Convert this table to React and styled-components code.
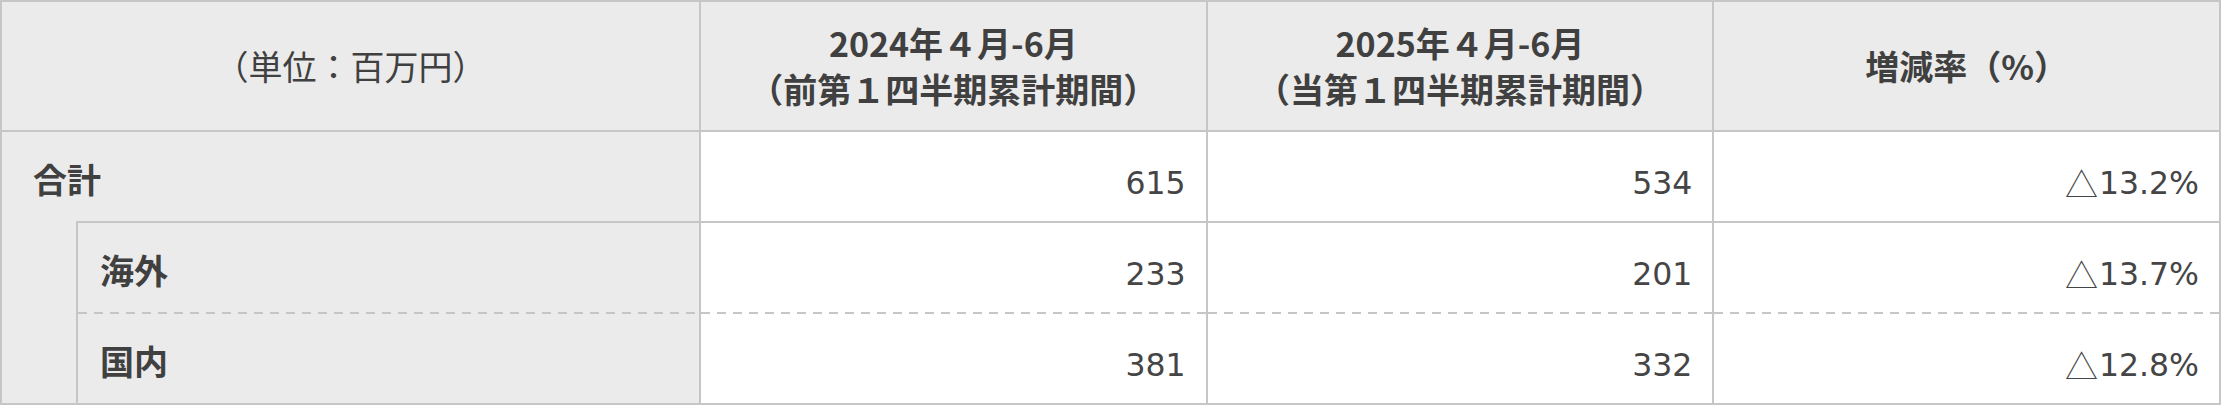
import React from 'react';
import styled, { createGlobalStyle, css } from 'styled-components';

const LINE = '#c6c6c6';
const GRAY = '#ebebeb';
const INK = '#404040';

const GlobalStyle = createGlobalStyle`
  html, body { margin: 0; padding: 0; background: #ffffff; }
  body {
    font-family: "Noto Sans CJK JP", sans-serif;
    color: ${INK};
  }
  * { box-sizing: border-box; }
`;

const dashedBottom = (bg) => css`
  background: repeating-linear-gradient(90deg, ${LINE} 0 9px, transparent 9px 16px) left bottom / 100% 2px no-repeat, ${bg};
  padding-bottom: 2px;
`;

const Table = styled.div`
  display: grid;
  grid-template-columns: 74px 625px repeat(3, 1fr);
  grid-template-rows: 130px repeat(3, 91px);
  width: 2221px;
  border-top: 2px solid ${LINE};
  border-left: 2px solid ${LINE};
`;

const HeadCell = styled.div`
  grid-column: ${(p) => p.$col || 'auto'};
  display: flex;
  flex-direction: column;
  align-items: center;
  justify-content: center;
  background: ${GRAY};
  border-right: 2px solid ${LINE};
  border-bottom: 2px solid ${LINE};
  font-size: 34px;
  line-height: 1.36;
  font-weight: ${(p) => (p.$bold ? 700 : 400)};
  text-align: center;
  white-space: nowrap;
`;

const TotalLabel = styled.div`
  grid-column: 1 / 3;
  display: flex;
  align-items: center;
  padding: 2px 0 0 31px;
  background: ${GRAY};
  border-right: 2px solid ${LINE};
  font-size: 34px;
  font-weight: 700;
`;

const Indent = styled.div`
  grid-column: 1;
  grid-row: 3 / 5;
  background: ${GRAY};
  border-bottom: 2px solid ${LINE};
`;

const SubLabel = styled.div`
  grid-column: 2;
  display: flex;
  align-items: center;
  padding: 4px 0 0 22px;
  border-left: 2px solid ${LINE};
  border-right: 2px solid ${LINE};
  font-size: 34px;
  font-weight: 700;
  ${(p) =>
    p.$first &&
    css`
      margin-top: -2px;
      border-top: 2px solid ${LINE};
    `}
  ${(p) =>
    p.$dashed
      ? dashedBottom(GRAY)
      : css`
          background: ${GRAY};
          border-bottom: 2px solid ${LINE};
        `}
`;

const ValueCell = styled.div`
  display: flex;
  align-items: center;
  justify-content: flex-end;
  padding: 12px 20px 0 0;
  border-right: 2px solid ${LINE};
  font-family: "DejaVu Sans", "Noto Sans CJK JP", sans-serif;
  font-size: 31.5px;
  color: #454545;
  white-space: nowrap;
  ${(p) =>
    p.$dashed
      ? dashedBottom('#ffffff')
      : css`
          background: #ffffff;
          border-bottom: 2px solid ${LINE};
        `}
`;

const Delta = styled.span`
  font-family: "Noto Sans CJK JP", sans-serif;
  font-weight: 300;
  font-size: 33px;
  margin-right: 1px;
`;

const Value = ({ v }) =>
  v.startsWith('△') ? (
    <>
      <Delta>△</Delta>
      {v.slice(1)}
    </>
  ) : (
    v
  );

const rows = [
  { label: '海外', values: ['233', '201', '△13.7%'], dashed: true, first: true },
  { label: '国内', values: ['381', '332', '△12.8%'], dashed: false, first: false },
];

export default function App() {
  return (
    <>
      <GlobalStyle />
      <Table>
        <HeadCell $col="1 / 3">（単位：百万円）</HeadCell>
        <HeadCell $bold>
          <span>2024年４月-6月</span>
          <span>（前第１四半期累計期間）</span>
        </HeadCell>
        <HeadCell $bold>
          <span>2025年４月-6月</span>
          <span>（当第１四半期累計期間）</span>
        </HeadCell>
        <HeadCell $bold>増減率（%）</HeadCell>

        <TotalLabel>合計</TotalLabel>
        <ValueCell><Value v="615" /></ValueCell>
        <ValueCell><Value v="534" /></ValueCell>
        <ValueCell><Value v="△13.2%" /></ValueCell>

        <Indent />
        {rows.map((r) => (
          <React.Fragment key={r.label}>
            <SubLabel $first={r.first} $dashed={r.dashed}>
              {r.label}
            </SubLabel>
            {r.values.map((v, i) => (
              <ValueCell key={i} $dashed={r.dashed}>
                <Value v={v} />
              </ValueCell>
            ))}
          </React.Fragment>
        ))}
      </Table>
    </>
  );
}
